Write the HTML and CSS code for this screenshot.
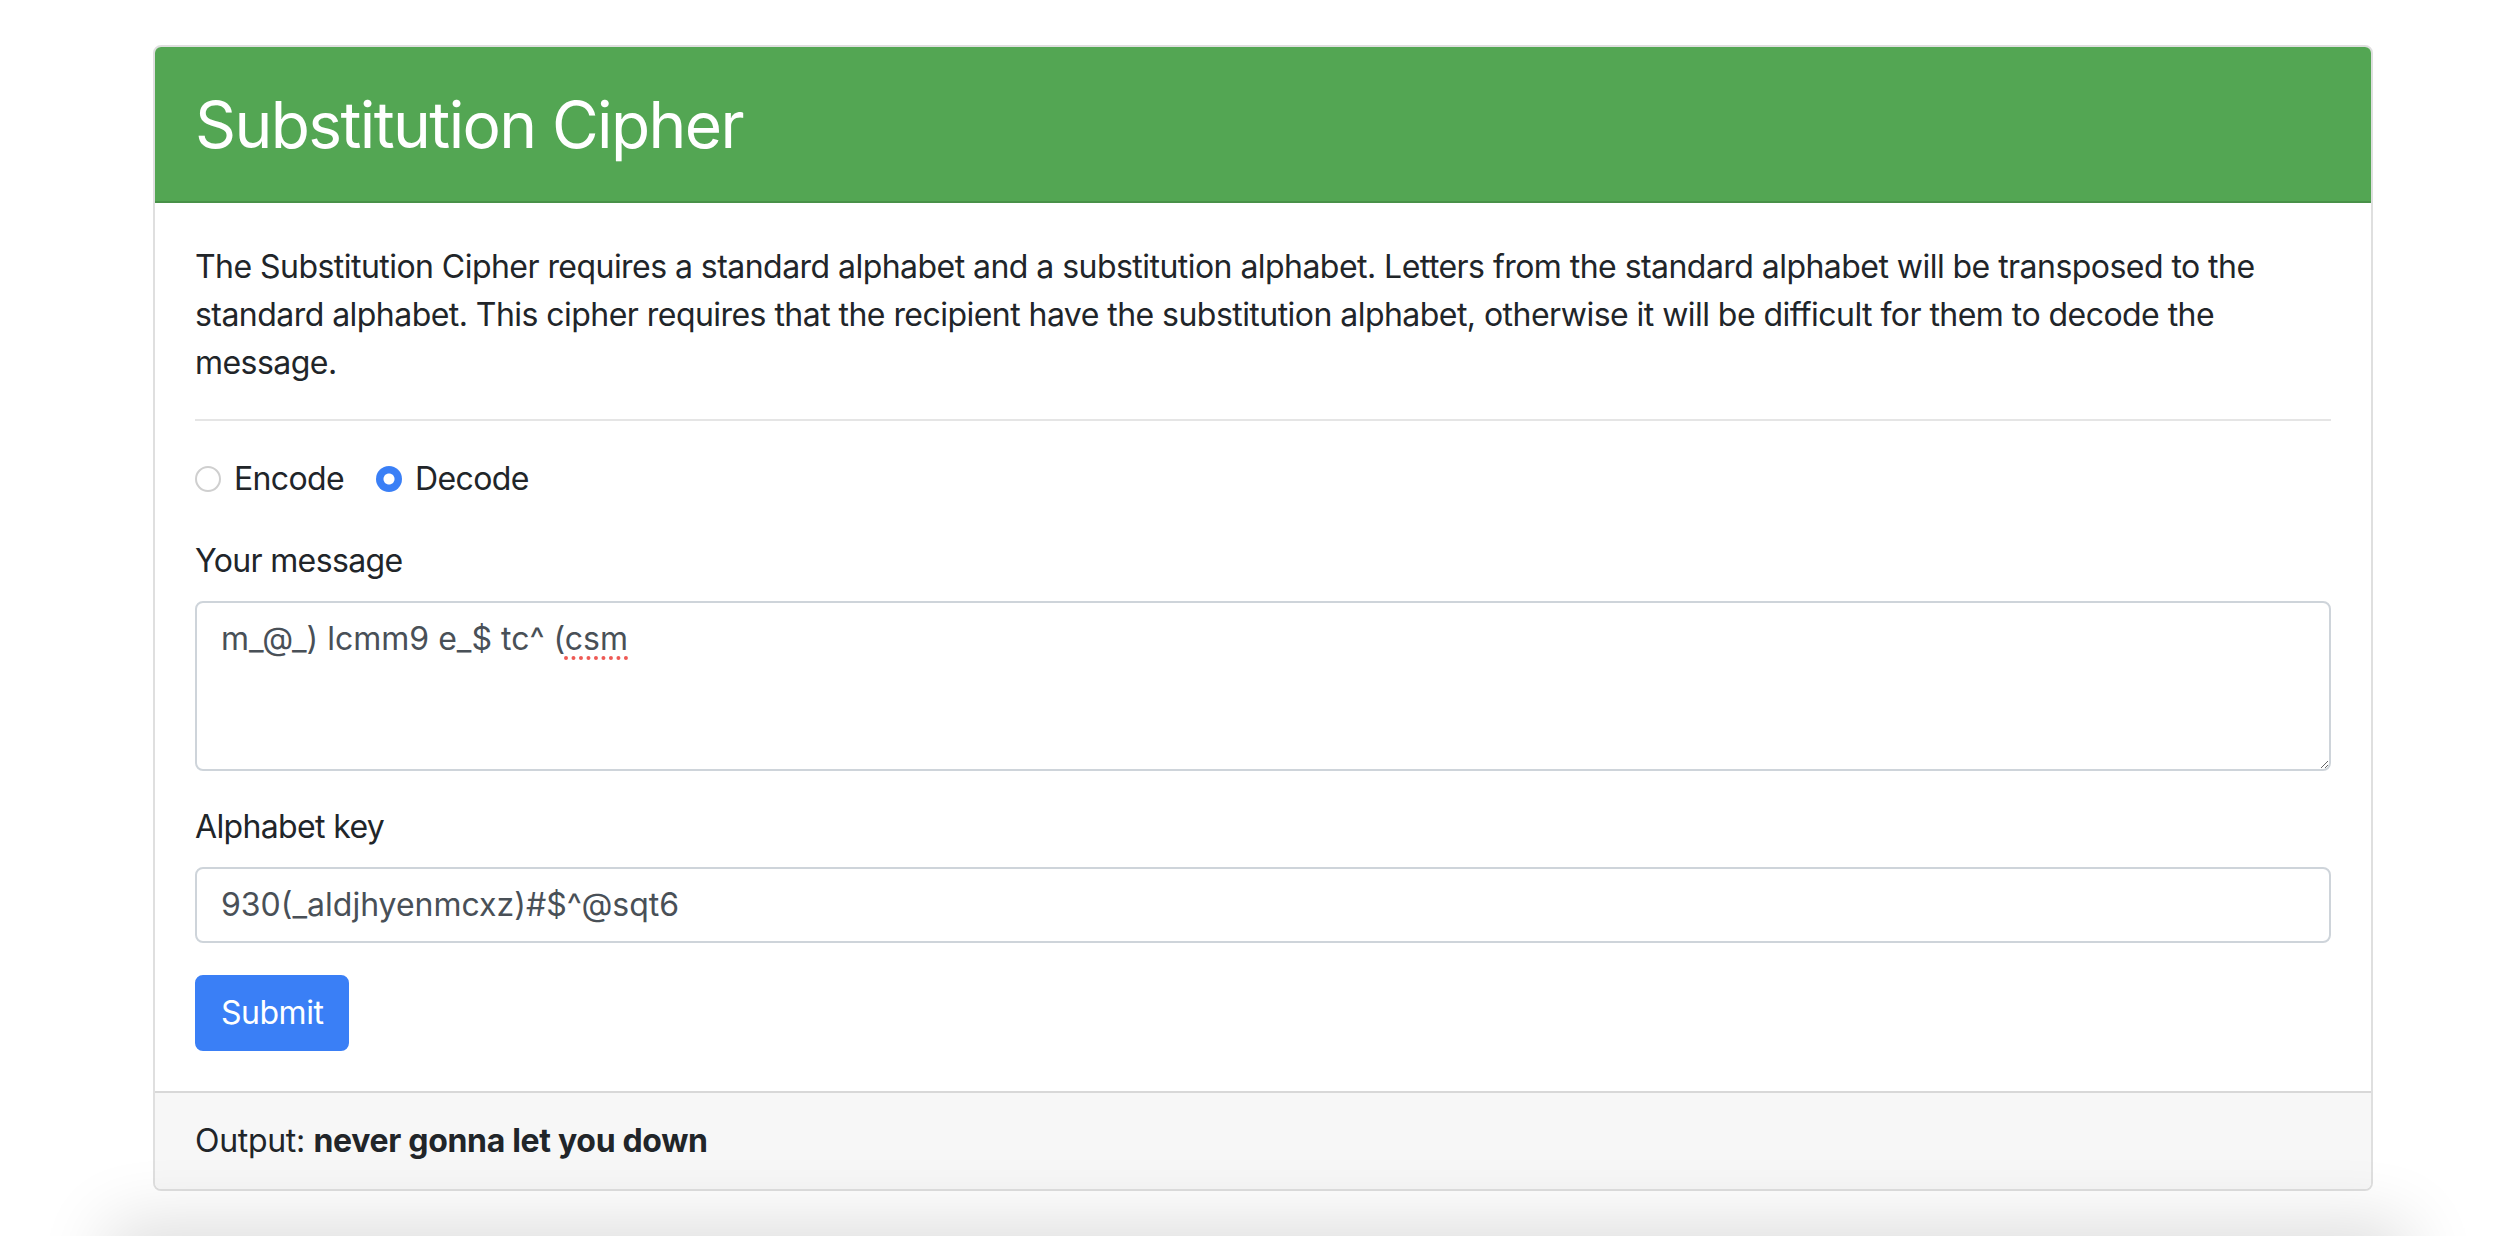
FILE: index.html
```html
<!DOCTYPE html>
<html lang="en">
<head>
    <meta charset="UTF-8">
    <meta name="viewport" content="width=device-width, initial-scale=1.0">
    <title>Substitution Cipher</title>
    <link rel="stylesheet" href="styles.css">
</head>
<body>
<div class="container">
    <div class="card">
        <!-- Header -->
        <div class="card-header">
            <h2>Substitution Cipher</h2>
        </div>

        <!-- Body -->
        <div class="card-body">
            <p>The Substitution Cipher requires a standard alphabet and a substitution alphabet. Letters from the standard alphabet will be transposed to the standard alphabet. This cipher requires that the recipient have the substitution alphabet, otherwise it will be difficult for them to decode the message.</p>
            <hr>
            <form>
                <div class="form-group radios">
                    <label class="form-check"><input type="radio" name="mode" value="encode"> Encode</label>
                    <label class="form-check"><input type="radio" name="mode" value="decode" checked> Decode</label>
                </div>
                <div class="form-group">
                    <label class="field-label">Your message</label>
                    <div class="form-control textarea" contenteditable="true" spellcheck="false">m_@_) lcmm9 e_$ tc^ (<span class="misspelled">csm</span></div>
                </div>
                <div class="form-group">
                    <label class="field-label" for="key">Alphabet key</label>
                    <input id="key" class="form-control" type="text" value="930(_aldjhyenmcxz)#$^@sqt6">
                </div>
                <button type="submit" class="btn">Submit</button>
            </form>
        </div>

        <!-- Footer -->
        <div class="card-footer">Output: <strong>never gonna let you down</strong></div>
    </div>
</div>
<div class="bottom-shadow"></div>
</body>
</html>
```

FILE: styles.css
```css
* {
    box-sizing: border-box;
}

body {
    margin: 0;
    font-family: Inter, "Noto Sans", sans-serif;
    font-size: 32px;
    line-height: 1.5;
    color: #212529;
    background-color: #fff;
    overflow: hidden;
}

.container {
    width: 2220px;
    margin-left: 153px;
    padding-top: 45px;
}

.card {
    border: 2px solid rgba(0, 0, 0, 0.125);
    border-radius: 8px;
    overflow: hidden;
}

/* Header */
.card-header {
    background-color: #53a653;
    color: #fff;
    padding: 40px 40px 37px;
    border-bottom: 2px solid rgba(0, 0, 0, 0.125);
}

.card-header h2 {
    margin: 0;
    font-size: 64px;
    font-weight: 400;
    line-height: 1.2;
    letter-spacing: -0.025em;
}

/* Body */
.card-body {
    padding: 40px;
}

.card-body p {
    margin: 0 0 32px;
    letter-spacing: -0.017em;
}

hr {
    border: 0;
    border-top: 2px solid rgba(0, 0, 0, 0.1);
    margin: 0 0 32px;
}

.form-group {
    margin-bottom: 32px;
}

.radios {
    display: flex;
    align-items: center;
    gap: 32px;
    height: 52px;
    letter-spacing: -0.02em;
}

.form-check {
    display: flex;
    align-items: center;
    gap: 13px;
}

.form-check input {
    appearance: none;
    width: 26px;
    height: 26px;
    margin: 0;
    border: 2px solid #cfcfcf;
    border-radius: 50%;
    background-color: #fff;
}

.form-check input:checked {
    border: 0;
    background: radial-gradient(circle, #fff 0 5px, #3a7ff6 6px);
}

.field-label {
    display: block;
    margin-bottom: 16px;
    letter-spacing: -0.02em;
}

.form-control {
    display: block;
    width: 100%;
    padding: 12px 24px;
    font: inherit;
    color: #495057;
    background-color: #fff;
    border: 2px solid #ced4da;
    border-radius: 8px;
    outline: none;
}

input.form-control {
    height: 76px;
}

.textarea {
    height: 170px;
    overflow: auto;
    resize: vertical;
}

.misspelled {
    text-decoration: underline dotted #ee5a55;
    text-decoration-thickness: 4px;
    text-underline-offset: 7px;
}

.btn {
    font: inherit;
    line-height: 1.5;
    letter-spacing: -0.015em;
    color: #fff;
    background-color: #3a7ff6;
    border: 2px solid #3a7ff6;
    border-radius: 8px;
    padding: 12px 24px;
    cursor: pointer;
}

/* Footer */
.card-footer {
    background-color: #f7f7f7;
    border-top: 2px solid rgba(0, 0, 0, 0.125);
    padding: 24px 40px;
    letter-spacing: -0.01em;
}

.bottom-shadow {
    position: fixed;
    left: 120px;
    right: 120px;
    top: 100%;
    height: 60px;
    box-shadow: 0 0 70px 12px rgba(0, 0, 0, 0.14);
}
```
